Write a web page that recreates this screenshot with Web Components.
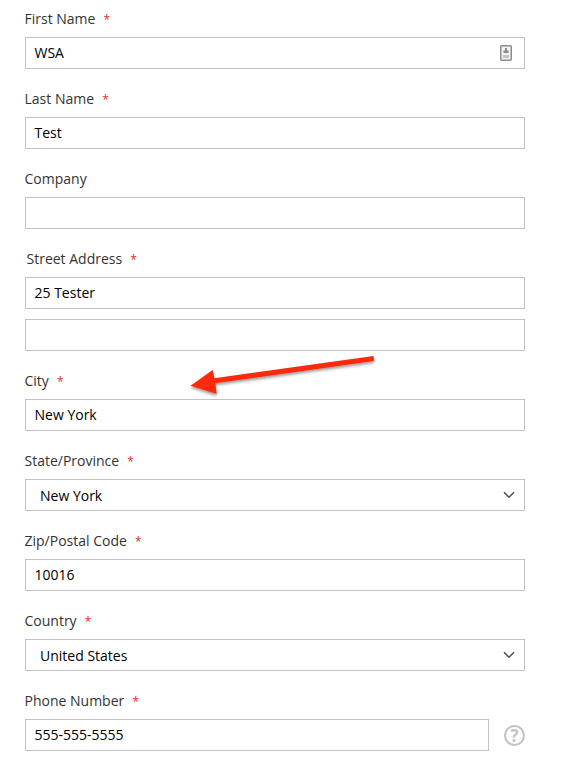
<!DOCTYPE html>
<html>
<head>
<meta charset="utf-8">
<title>Address form</title>
<style>
    html, body { margin: 0; padding: 0; background: #fff; }
    body { font-family: 'Open Sans', sans-serif; overflow: hidden; }
</style>
</head>
<body>
<address-form>
    <form-field label="First Name" required>
        <text-box autofill>WSA</text-box>
    </form-field>
    <form-field label="Last Name" required>
        <text-box>Test</text-box>
    </form-field>
    <form-field label="Company">
        <text-box></text-box>
    </form-field>
    <form-field label="Street Address" required indent>
        <text-box>25 Tester</text-box>
        <text-box></text-box>
    </form-field>
    <form-field label="City" required>
        <text-box>New York</text-box>
    </form-field>
    <form-field label="State/Province" required>
        <select-box>New York</select-box>
    </form-field>
    <form-field label="Zip/Postal Code" required>
        <text-box>10016</text-box>
    </form-field>
    <form-field label="Country" required>
        <select-box>United States</select-box>
    </form-field>
    <form-field label="Phone Number" required>
        <help-row>
            <text-box>555-555-5555</text-box>
        </help-row>
    </form-field>
</address-form>

<script>
class AddressForm extends HTMLElement {
    constructor() {
        super();
        this.attachShadow({ mode: 'open' });
        this.shadowRoot.innerHTML = `
            <style>
                :host {
                    display: flex;
                    flex-direction: column;
                    gap: 20px;
                    position: relative;
                    width: 500px;
                    padding: 9px 0 0 25px;
                }
                svg {
                    position: absolute;
                    left: 0;
                    top: 0;
                    overflow: visible;
                    pointer-events: none;
                }
            </style>
            <slot></slot>
            <svg width="582" height="772" viewBox="0 0 582 772" aria-hidden="true">
                <defs>
                    <filter id="shadow" x="-10%" y="-30%" width="120%" height="180%">
                        <feDropShadow dx="0" dy="2" stdDeviation="1.5" flood-color="#000" flood-opacity="0.4"/>
                    </filter>
                </defs>
                <path filter="url(#shadow)" fill="#fb2a0c" d="M373.6 356 L374 361 L215.4 383.2 L216.7 394 L190.5 385.7 L212.7 370 L214.4 378.2 Z"/>
            </svg>
        `;
    }
}

class FormField extends HTMLElement {
    constructor() {
        super();
        this.attachShadow({ mode: 'open' });
        this.shadowRoot.innerHTML = `
            <style>
                :host {
                    display: flex;
                    flex-direction: column;
                }
                .label {
                    height: 20px;
                    line-height: 20px;
                    margin: 0 0 8px -0.5px;
                    font-size: 14px;
                    color: #333;
                }
                :host([indent]) .label { padding-left: 2px; }
                .star {
                    display: none;
                    margin-left: 4.5px;
                    font-size: 12px;
                    color: #e02b27;
                }
                :host([required]) .star { display: inline; }
                .controls {
                    display: flex;
                    flex-direction: column;
                    gap: 10px;
                }
            </style>
            <div class="label"><span class="text"></span> <span class="star">*</span></div>
            <div class="controls"><slot></slot></div>
        `;
        this.shadowRoot.querySelector('.text').textContent = this.getAttribute('label');
    }
}

class TextBox extends HTMLElement {
    constructor() {
        super();
        this.attachShadow({ mode: 'open' });
        this.shadowRoot.innerHTML = `
            <style>
                :host {
                    display: flex;
                    align-items: center;
                    justify-content: space-between;
                    box-sizing: border-box;
                    height: 32px;
                    padding: 0 12px 0 8.5px;
                    border: 1px solid #c2c2c2;
                    background: #fff;
                    font-size: 14px;
                    color: #000;
                }
                span { margin-bottom: 2px; }
                svg { display: none; }
                :host([autofill]) svg { display: block; }
            </style>
            <span><slot></slot></span>
            <svg width="12" height="16" viewBox="0 0 12 16" aria-hidden="true">
                <rect x="0.75" y="0.75" width="10.5" height="14.5" rx="1" fill="#f2f2f2" stroke="#8c8c8c" stroke-width="1.5"/>
                <rect x="5" y="3" width="2" height="3" fill="#8c8c8c"/>
                <rect x="3.5" y="5.5" width="5" height="2.5" fill="#8c8c8c"/>
                <rect x="3" y="10" width="6" height="3" fill="#c4c4c4"/>
            </svg>
        `;
    }
}

class SelectBox extends HTMLElement {
    constructor() {
        super();
        this.attachShadow({ mode: 'open' });
        this.shadowRoot.innerHTML = `
            <style>
                :host {
                    display: flex;
                    align-items: center;
                    justify-content: space-between;
                    box-sizing: border-box;
                    height: 32px;
                    padding: 0 9px 0 14px;
                    border: 1px solid #c2c2c2;
                    background: #fff;
                    font-size: 14px;
                    color: #000;
                }
            </style>
            <span><slot></slot></span>
            <svg width="12" height="8" viewBox="0 0 12 8" aria-hidden="true">
                <path d="M1 1.2 L6 6.2 L11 1.2" fill="none" stroke="#4d4d4d" stroke-width="1.5"/>
            </svg>
        `;
    }
}

class HelpRow extends HTMLElement {
    constructor() {
        super();
        this.attachShadow({ mode: 'open' });
        this.shadowRoot.innerHTML = `
            <style>
                :host {
                    display: grid;
                    grid-template-columns: 464px 1fr;
                    column-gap: 15px;
                    align-items: center;
                }
                .help {
                    box-sizing: border-box;
                    width: 21px;
                    height: 21px;
                    border: 2px solid #c2c2c2;
                    border-radius: 50%;
                    text-align: center;
                    line-height: 17px;
                    font-size: 17px;
                    font-weight: 700;
                    color: #c2c2c2;
                }
            </style>
            <slot></slot>
            <span class="help">?</span>
        `;
    }
}

customElements.define('address-form', AddressForm);
customElements.define('form-field', FormField);
customElements.define('text-box', TextBox);
customElements.define('select-box', SelectBox);
customElements.define('help-row', HelpRow);
</script>
</body>
</html>
